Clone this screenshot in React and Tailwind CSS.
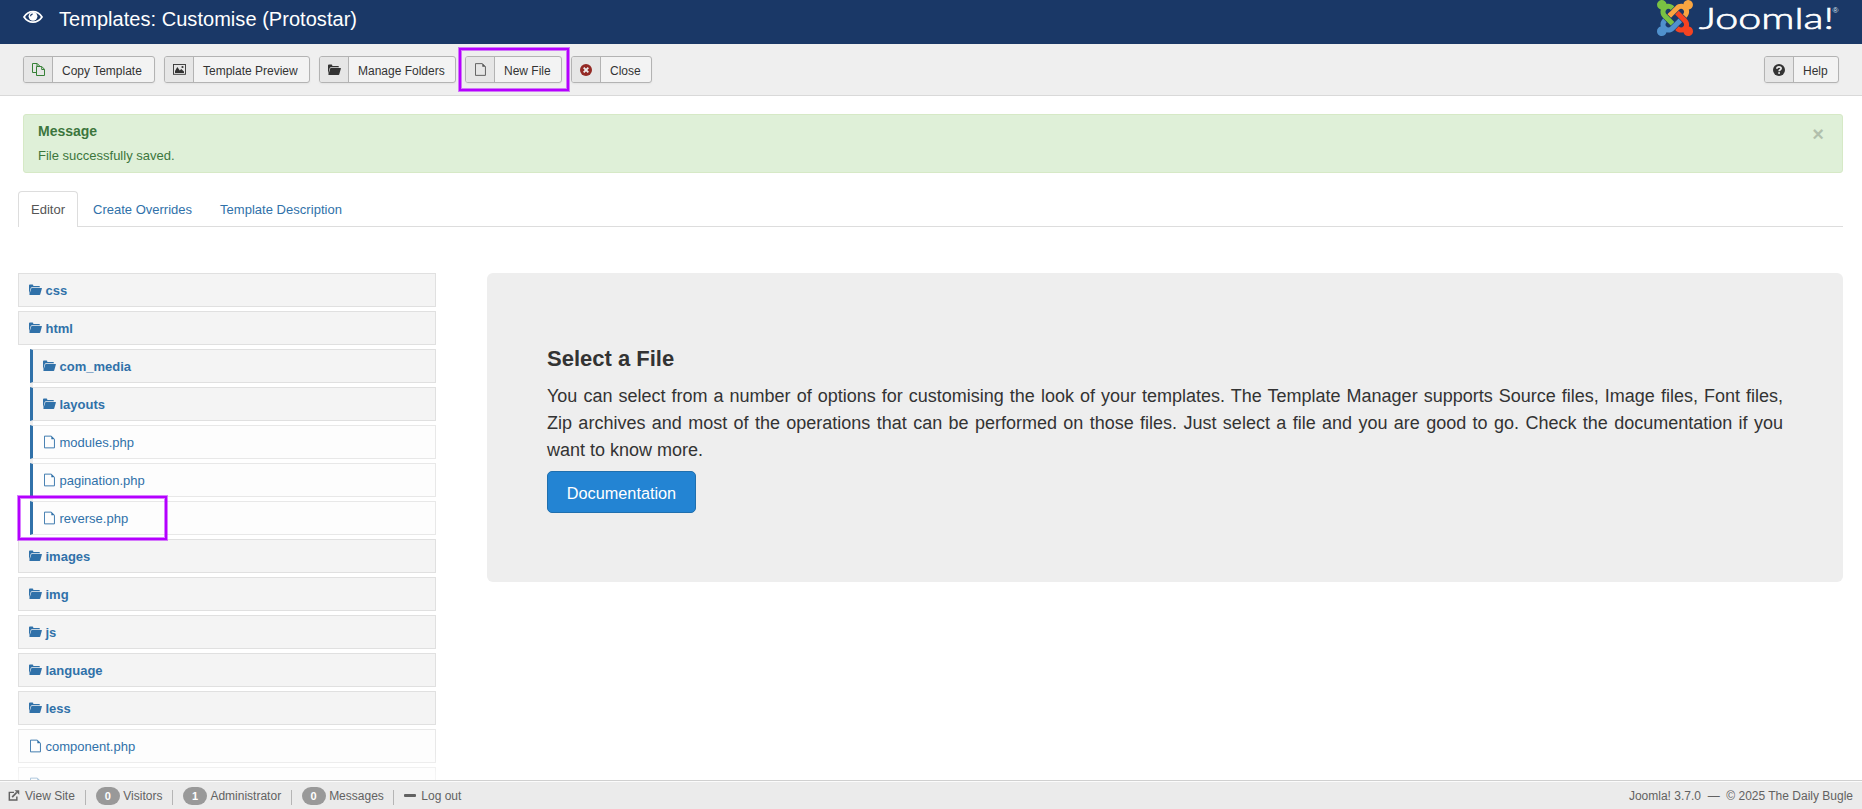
import React from "react";

const FolderOpen = ({ className }) => (
  <svg className={className} viewBox="0 0 13 12" fill="currentColor">
    <path d="M2.900 4h9.700c.3 0 .4.2.3.5l-1.700 6.100c-.1.300-.3.400-.6.400H.700c-.3 0-.4-.2-.3-.5l1.800-6c.1-.3.300-.5.700-.5z" />
    <path d="M0 10.600V1.600C0 1 .3.6.9.6h2.500c.6 0 .9.3.9 1V2H10c.6 0 .9.300.9.800v.400H3C2.300 3.200 1.900 3.500 1.700 4.100z" />
  </svg>
);

const FileIcon = ({ className }) => (
  <svg className={className} viewBox="0 0 12 14" fill="none" stroke="currentColor">
    <path d="M.5.600H8L11.400 4v9.400H.5z" />
    <path d="M8 .500V4h3.500z" fill="currentColor" stroke="none" />
  </svg>
);

const CopyIcon = ({ className }) => (
  <svg className={className} viewBox="0 0 13 13" fill="none" stroke="currentColor" strokeWidth="1">
    <path d="M4.500 9.500H.5V.500h4.700l2.500 2.500v.7" />
    <path d="M5 .600v2.700h2.700M9.700 3.800v2.700h2.700" />
    <path d="M4.500 3.500h5.300l2.700 2.800v6.200h-8z" />
  </svg>
);

const PictureIcon = ({ className }) => (
  <svg className={className} viewBox="0 0 13 11">
    <rect x=".5" y=".5" width="12" height="9.800" fill="none" stroke="currentColor" strokeWidth=".9" />
    <path d="M2 9V7l2.300-4 2.500 3.600L8.200 5 11 7.500V9z" fill="currentColor" />
    <circle cx="9.500" cy="3" r="1.100" fill="currentColor" />
  </svg>
);

const CancelIcon = ({ className }) => (
  <svg className={className} viewBox="0 0 12 12">
    <circle cx="6" cy="6" r="6" fill="currentColor" />
    <path d="M3.700 3.700l4.600 4.600M8.300 3.700L3.700 8.300" stroke="#ececec" strokeWidth="1.900" />
  </svg>
);

const HelpIcon = ({ className }) => (
  <svg className={className} viewBox="0 0 12 12">
    <circle cx="6" cy="6" r="6" fill="currentColor" />
    <path d="M3.900 4.700C3.900 2.300 8.100 2.300 8.100 4.500 8.100 5.900 6.100 5.700 6.100 7.300" fill="none" stroke="#ececec" strokeWidth="1.700" />
    <rect x="5.200" y="8.200" width="1.800" height="1.600" fill="#ececec" />
  </svg>
);

const EyeIcon = ({ className }) => (
  <svg className={className} viewBox="0 0 20 14">
    <path d="M1 7C5.500-.3 14.500-.3 19 7 14.500 13.800 5.500 13.800 1 7z" fill="none" stroke="#fff" strokeWidth="1.700" />
    <circle cx="10" cy="6.300" r="4.400" fill="#fff" />
    <path d="M7.600 6.300A2.400 2.400 0 0 1 9.800 4" fill="none" stroke="#1a3867" strokeWidth="1.200" />
  </svg>
);

const ShareIcon = ({ className }) => (
  <svg className={className} viewBox="0 0 12 12" fill="none" stroke="currentColor" strokeWidth="1.600">
    <path d="M6 2.600H.9v8.200h8.200V7" />
    <path d="M4 7.800l5-5.200" strokeWidth="1.800" />
    <path d="M6.700.200h5v5z" fill="currentColor" stroke="none" />
  </svg>
);

const JoomlaLogo = ({ className }) => (
  <svg className={className} viewBox="0 0 184 38">
    <g transform="scale(.0804) translate(0 -32)">
      <path fill="#7ac143" d="M.6 92.1C.6 58.8 27.4 32 60.4 32c30 0 54.5 21.9 59.2 50.2 32.6-7.6 67.1.6 96.5 30l-44.3 44.3c-20.5-20.5-42.6-16.3-55.4-3.5-14.3 14.3-14.3 37.9 0 52.2l99.5 99.5-44 44.3c-87.7-87.2-49.7-49.7-99.8-99.7-26.8-26.5-35-64.8-24.8-98.9C20.4 144.6.6 120.7.6 92.1z" />
      <path fill="#f9a541" d="M130.1 208.5l44.3 44.3c10-10 89.7-89.7 99.7-99.8 14.3-14.3 37.6-14.3 51.9 0 12.8 12.8 17 35-3.5 55.4l44 44.3c31.2-31.2 38.5-67.6 28.9-101.2 29.2-4.1 51.9-29.2 51.9-59.5 0-33.2-26.8-60.1-59.8-60.1-30.3 0-55.4 22.5-59.5 51.6-33.8-9.9-71.7-1.5-98.3 25.1-18.3 19.1-71.1 71.5-99.6 99.9z" />
      <path fill="#f44321" d="M396.400 360.700c8.2-32.700-.9-68.500-26.300-93.900-11.800-12.200 5 4.700-99.500-99.700l-44.300 44.300 99.700 99.700c14.300 14.300 14.300 37.600 0 51.900-12.800 12.800-35 17-55.400-3.500l-44 44.300c27.600 30.200 68 38.800 102.700 28 5.500 27.400 29.700 48.100 58.900 48.100 33 0 59.800-26.800 59.800-60.100 0-30.200-22.500-55-51.600-59.100z" />
      <path fill="#5091cd" d="M312.100 307.600l-44-44.300c-87 86.400-50.400 50.400-99.700 99.800-14.300 14.300-37.600 14.300-51.900 0-13.100-13.400-16.900-35.300 3.200-55.400l-44-44.300c-30.200 30.200-38 65.200-29.500 98.300-26.700 6-46.200 29.900-46.200 58.200C0 453.200 26.800 480 59.800 480c28.600 0 52.500-19.800 58.600-46.700 32.700 8.200 68.500-.6 94.200-26 32.100-32 12.200-12.400 99.500-99.700z" />
    </g>
    <text x="42" y="29" fill="#fff" stroke="#fff" strokeWidth=".7" fontFamily="Lato, sans-serif" fontWeight="300" fontSize="30" textLength="135" lengthAdjust="spacingAndGlyphs">Joomla!</text>
    <text x="175.500" y="13" fill="#dfe5ee" fontFamily="Liberation Sans, sans-serif" fontSize="8">®</text>
  </svg>
);

function ToolButton({ icon, label, children, className }) {
  return (
    <div className={"relative flex h-[27px] rounded-[3px] border border-[#b3b3b3] bg-[#f3f3f3] text-[12px] text-[#333] shadow-[0_1px_2px_rgba(0,0,0,0.05)] " + className}>
      <span className="flex w-[29px] shrink-0 items-center justify-center rounded-l-[2px] border-r border-[#b3b3b3] bg-[#e6e6e6]">{icon}</span>
      <span className="flex-1 pl-[9px] leading-[28px] whitespace-nowrap">{label}</span>
      {children}
    </div>
  );
}

function Row({ folder, nested, name, children }) {
  return (
    <li
      className={
        "relative flex h-[34px] items-center border text-[13px] text-[#3071a9] " +
        (folder ? "border-[#e0e0e0] bg-[#f4f4f4] font-bold " : "border-[#e8e8e8] bg-[#fdfdfd] ") +
        (nested ? "-ml-[3px] border-l-[3px] border-l-[#3071a9] pl-[10px]" : "pl-[10px]")
      }
    >
      {folder ? <FolderOpen className="mr-[3.5px] h-[12px] w-[13px]" /> : <FileIcon className="mr-[4.5px] mb-[1px] ml-px h-[14px] w-[11px]" />}
      <span className="pt-[2px]">{name}</span>
      {children}
    </li>
  );
}

const Mark = ({ className }) => (
  <span className={"pointer-events-none absolute z-10 border-2 border-[#b400ff] shadow-[0_0_0_1px_rgba(180,0,255,0.5),inset_0_0_0_1px_rgba(180,0,255,0.5)] " + className} />
);

const Sep = ({ className }) => <span className={"mt-[4px] h-[15px] w-px bg-[#b5b5b5] " + className} />;

const Badge = ({ children }) => (
  <span className="mt-px mr-[3.5px] flex h-[18px] w-[24px] items-center justify-center rounded-full bg-[#999] text-[11px] font-bold text-white">{children}</span>
);

export default function App() {
  return (
    <div className="flex h-[809px] w-[1862px] flex-col overflow-hidden bg-white font-['Liberation_Sans',Arial,sans-serif] text-[13px] text-[#333]">
      <header className="flex h-[44px] shrink-0 items-start bg-[#1a3867] pl-[23px]">
        <EyeIcon className="mt-[10px] h-[14px] w-[20px]" />
        <h1 className="ml-[16px] flex-1 text-[20px] leading-[38px] tracking-[0.04px] text-white">Templates: Customise (Protostar)</h1>
        <JoomlaLogo className="mr-[21px] h-[38px] w-[184px]" />
      </header>

      <div className="flex h-[52px] shrink-0 items-start border-b border-[#d9d9d9] bg-[#efefef] pt-[12px] pr-[23px] pl-[23px]">
        <ToolButton className="w-[132px]" label="Copy Template" icon={<CopyIcon className="h-[13px] w-[13px] text-[#378137]" />} />
        <ToolButton className="ml-[9px] w-[146px]" label="Template Preview" icon={<PictureIcon className="h-[11px] w-[13px]" />} />
        <ToolButton className="ml-[9px] w-[137px]" label="Manage Folders" icon={<FolderOpen className="h-[12px] w-[13px]" />} />
        <ToolButton className="ml-[9px] w-[97px]" label="New File" icon={<FileIcon className="h-[13px] w-[11px] text-[#555]" />}>
          <Mark className="-top-[9px] -left-[7px] h-[43px] w-[110px]" />
        </ToolButton>
        <ToolButton className="ml-[9px] w-[81px]" label="Close" icon={<CancelIcon className="h-[12px] w-[12px] text-[#942a25]" />} />
        <ToolButton className="ml-auto w-[75px]" label="Help" icon={<HelpIcon className="h-[12px] w-[12px]" />} />
      </div>

      <main className="min-h-0 flex-1 pt-[18px] pr-[19px] pl-[18px]">
        <div className="ml-[5px] flex h-[59px] justify-between rounded-[3px] border border-[#d6e9c6] bg-[#dff0d8] pr-[18px] pl-[14px] text-[#3c763d]">
          <div>
            <h4 className="mt-[7px] text-[14px] leading-[18px] font-bold">Message</h4>
            <p className="mt-[7px] leading-[18px]">File successfully saved.</p>
          </div>
          <span className="mt-[9px] text-[20px] leading-[20px] font-bold text-black opacity-20">×</span>
        </div>

        <nav className="mt-[18px] flex h-[36px] border-b border-[#ddd] text-[#3071a9]">
          <span className="h-[36px] w-[60px] rounded-t-[4px] border border-b-0 border-[#ddd] bg-white pl-[12px] leading-[35px] text-[#555]">Editor</span>
          <span className="ml-[15px] leading-[37px]">Create Overrides</span>
          <span className="ml-[28px] leading-[37px] tracking-[0.03px]">Template Description</span>
        </nav>

        <div className="mt-[46px] flex items-start justify-between">
          <ul className="flex w-[418px] flex-col gap-[4px]">
            <Row folder name="css" />
            <Row folder name="html" />
            <li className="ml-[12px]">
              <ul className="flex flex-col gap-[4px] border-l-[3px] border-[#eee]">
                <Row nested folder name="com_media" />
                <Row nested folder name="layouts" />
                <Row nested name="modules.php" />
                <Row nested name="pagination.php" />
                <Row nested name="reverse.php">
                  <Mark className="-top-[6px] -left-[15px] h-[44px] w-[149px]" />
                </Row>
              </ul>
            </li>
            <Row folder name="images" />
            <Row folder name="img" />
            <Row folder name="js" />
            <Row folder name="language" />
            <Row folder name="less" />
            <Row name="component.php" />
            <Row name="error.php" />
          </ul>

          <section className="h-[309px] w-[1356px] rounded-[6px] bg-[#eee] px-[60px] pt-[72px]">
            <h2 className="text-[22px] leading-[28px] font-bold">Select a File</h2>
            <p className="mt-[10px] text-justify text-[18px] leading-[27px]">
              You can select from a number of options for customising the look of your templates. The Template Manager supports Source files, Image files, Font files, Zip archives and most of the operations that can be performed on those files. Just select a file and you are good to go. Check the documentation if you want to know more.
            </p>
            <button className="mt-[7px] block h-[42px] w-[149px] rounded-[5px] border border-[#1f6fae] bg-[#2384d3] pt-[2px] text-[16.25px] text-white">Documentation</button>
          </section>
        </div>
      </main>

      <footer className="relative flex h-[29px] shrink-0 border-t border-[#d0d0d0] bg-[#ebebeb] pt-[5px] pl-[8px] text-[12px] leading-[20px] text-[#626262] shadow-[0_1px_0_rgba(255,255,255,0.8)_inset,0_-15px_15px_rgba(255,255,255,0.6)]">
        <ShareIcon className="mt-[4px] mr-[5px] h-[11px] w-[12px]" />
        <span>View Site</span>
        <Sep className="mr-[10px] ml-[10px]" />
        <Badge>0</Badge>
        <span>Visitors</span>
        <Sep className="mr-[10px] ml-[9.5px]" />
        <Badge>1</Badge>
        <span>Administrator</span>
        <Sep className="mr-[10px] ml-[9.5px]" />
        <Badge>0</Badge>
        <span>Messages</span>
        <Sep className="mr-[10px] ml-[9.5px]" />
        <span className="mt-[8px] mr-[5px] h-[3px] w-[12px] rounded-[1px] bg-[#626262]" />
        <span>Log out</span>
        <span className="mr-[9px] ml-auto leading-[20px] whitespace-pre">Joomla! 3.7.0&nbsp; —&nbsp; © 2025 The Daily Bugle</span>
      </footer>
    </div>
  );
}
